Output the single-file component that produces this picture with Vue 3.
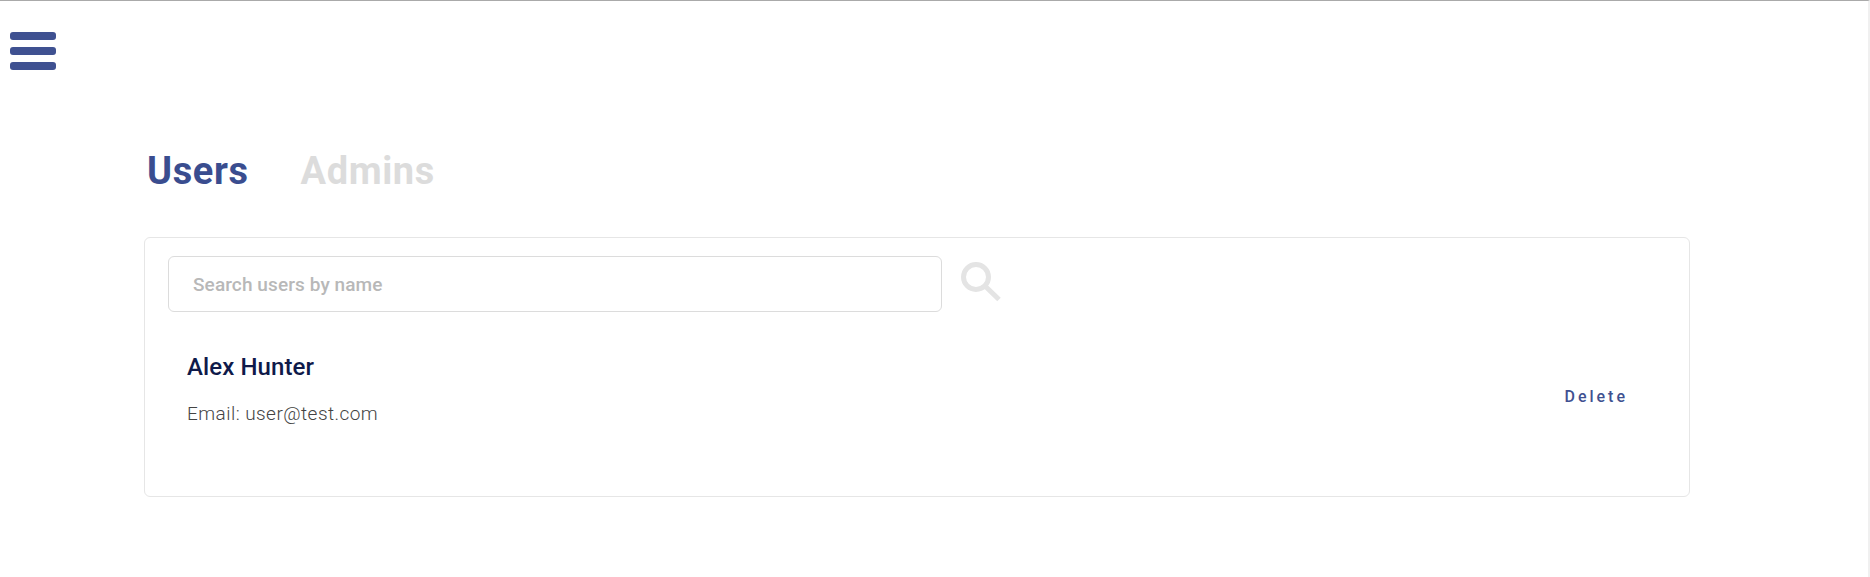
<script setup>
const users = [{ name: 'Alex Hunter', email: 'user@test.com' }]
</script>

<template>
  <div class="page">
    <button class="menu" aria-label="Menu">
      <span></span><span></span><span></span>
    </button>
    <main class="content">
      <div class="tabs">
        <h2 class="tab active">Users</h2>
        <h2 class="tab">Admins</h2>
      </div>
      <section class="card">
        <div class="search">
          <input class="input" placeholder="Search users by name" />
          <svg class="glass" width="42" height="42" viewBox="0 0 42 42" fill="none" stroke="#e4e4e4">
            <circle cx="16" cy="16" r="12.5" stroke-width="5" />
            <path d="M25 25 L39 38.5" stroke-width="5" />
          </svg>
        </div>
        <div v-for="u in users" :key="u.email" class="user">
          <div>
            <div class="name">{{ u.name }}</div>
            <div class="email">Email: {{ u.email }}</div>
          </div>
          <button class="delete">Delete</button>
        </div>
      </section>
    </main>
  </div>
</template>

<style>
html, body { margin: 0; background: #fff; }
</style>

<style scoped>
.page {
  height: 577px;
  box-sizing: border-box;
  border-top: 1px solid #aaa;
  border-right: 2px solid #f0f0f0;
  font-family: "Roboto", "Liberation Sans", sans-serif;
  overflow: hidden;
}
.menu {
  display: flex;
  flex-direction: column;
  gap: 7px;
  padding: 0;
  margin: 31px 0 0 10px;
  border: 0;
  background: none;
}
.menu span {
  display: block;
  width: 46px;
  height: 8px;
  border-radius: 3px;
  background: #3f5191;
}
.content {
  margin: 78px 0 0 144px;
  width: 1546px;
}
.tabs {
  display: flex;
  gap: 52px;
  padding-left: 3px;
}
.tab {
  margin: 0;
  font-size: 38px;
  line-height: 46px;
  font-weight: 700;
  letter-spacing: 0.6px;
  color: #dcdcdc;
}
.tab.active { color: #3a4d8f; }
.card {
  margin-top: 43px;
  height: 260px;
  box-sizing: border-box;
  border: 1px solid #e6e6e6;
  border-radius: 6px;
  padding: 18px 61px 0 23px;
}
.search {
  display: flex;
  align-items: flex-start;
  gap: 18px;
}
.glass { margin-top: 5px; }
.input {
  width: 774px;
  height: 56px;
  box-sizing: border-box;
  border: 1px solid #dcdcdc;
  border-radius: 6px;
  padding: 0 24px;
  font: 500 19px "Roboto", sans-serif;
  letter-spacing: 0.1px;
}
.input::placeholder { color: #b8b8b8; }
.user {
  display: flex;
  justify-content: space-between;
  align-items: center;
  margin-top: 39px;
  padding-left: 19px;
}
.name { font-size: 24px; line-height: 32px; font-weight: 500; letter-spacing: 0.1px; color: #0f1a4a; }
.email { margin-top: 18px; font-size: 19px; line-height: 26px; font-weight: 300; letter-spacing: 0.45px; color: #444; }
.delete {
  margin-top: 14px;
  border: 0;
  background: none;
  padding: 0;
  font: 500 16px "Roboto", sans-serif;
  letter-spacing: 3px;
  color: #3f5191;
}
</style>
